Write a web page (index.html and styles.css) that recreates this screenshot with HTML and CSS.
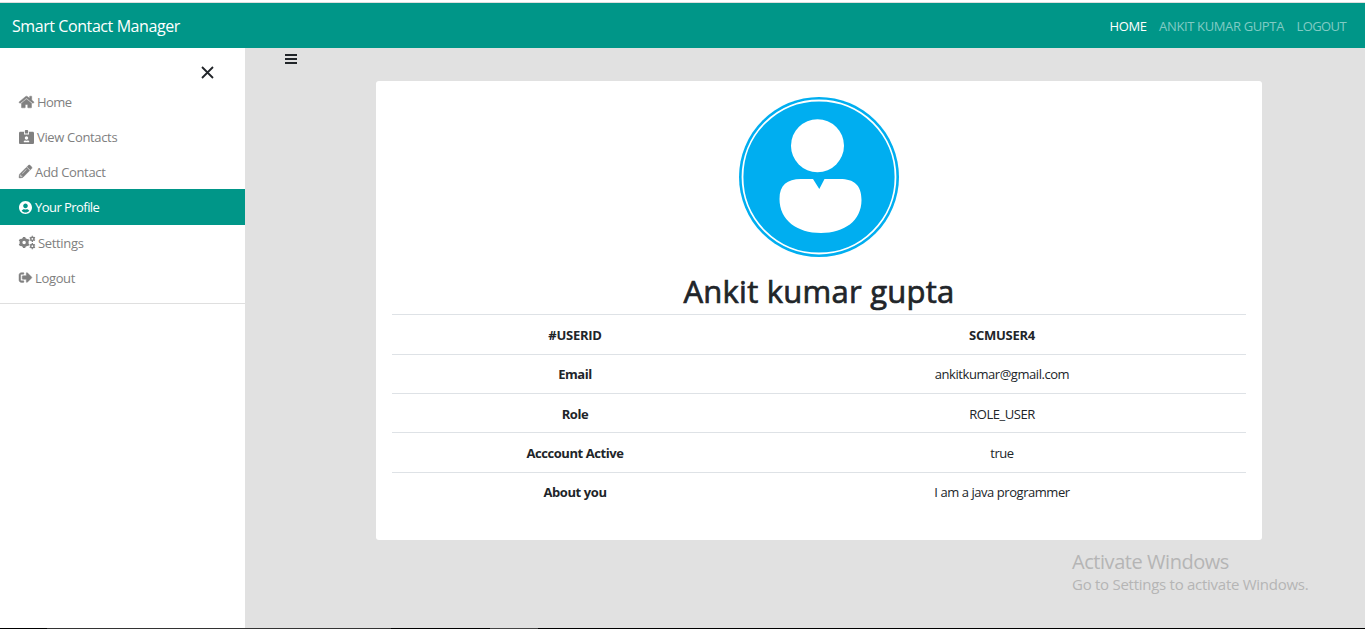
FILE: index.html
```html
<!DOCTYPE html>
<html lang="en">
<head>
<meta charset="utf-8">
<title>Smart Contact Manager</title>
<link rel="stylesheet" href="styles.css">
</head>
<body>
<div class="page">
  <header class="navbar">
    <a class="brand">Smart Contact Manager</a>
    <nav class="links"><a class="current">HOME</a><a>ANKIT KUMAR GUPTA</a><a class="tight">LOGOUT</a></nav>
  </header>
  <div class="body">
    <aside class="sidebar">
      <div class="close"><svg width="13" height="13" viewBox="0 0 13 13"><path d="M1 1L12 12M12 1L1 12" fill="none" stroke="#212529" stroke-width="1.8"/></svg></div>
      <a class="item"><svg class="bold" width="15" height="14" viewBox="0 0 576 512"><path d="M280.37 148.26L96 300.11V464a16 16 0 0 0 16 16l112.06-.29a16 16 0 0 0 15.92-16V368a16 16 0 0 1 16-16h64a16 16 0 0 1 16 16v95.64a16 16 0 0 0 16 16.05L464 480a16 16 0 0 0 16-16V300L295.67 148.26a12.19 12.19 0 0 0-15.3 0zM571.6 251.47L488 182.56V44.05a12 12 0 0 0-12-12h-56a12 12 0 0 0-12 12v72.61L318.47 43a48 48 0 0 0-61 0L4.34 251.47a12 12 0 0 0-1.6 16.9l25.5 31A12 12 0 0 0 45.15 301l235.22-193.74a12.19 12.19 0 0 1 15.3 0L530.9 301a12 12 0 0 0 16.9-1.6l25.5-31a12 12 0 0 0-1.7-16.93z"/></svg><span class="tight">Home</span></a>
      <a class="item"><svg width="15" height="14" viewBox="0 0 576 512" preserveAspectRatio="none"><path d="M528 64H384v96H192V64H48C21.5 64 0 85.5 0 112v352c0 26.500 21.500 48 48 48h480c26.500 0 48-21.500 48-48V112c0-26.500-21.500-48-48-48zM288 224c35.300 0 64 28.700 64 64s-28.700 64-64 64-64-28.700-64-64 28.700-64 64-64zm93.300 224H194.700c-10.400 0-18.800-10-15.600-19.800 8.300-25.600 32.400-44.200 60.900-44.200h8.200c12.300 5.100 25.700 8 39.800 8s27.600-2.900 39.800-8h8.200c28.400 0 52.500 18.500 60.900 44.200 3.200 9.900-5.200 19.800-15.600 19.800zM352 32c0-17.700-14.300-32-32-32h-64c-17.700 0-32 14.300-32 32v96h128V32z"/></svg><span>View Contacts</span></a>
      <a class="item"><svg class="bold" width="13" height="13" viewBox="0 0 512 512"><path d="M497.900 142.100l-46.100 46.100c-4.700 4.700-12.300 4.700-17 0l-111-111c-4.700-4.700-4.700-12.300 0-17l46.100-46.100c18.700-18.700 49.100-18.700 67.900 0l60.100 60.100c18.800 18.700 18.800 49.100 0 67.900zM284.200 99.800L21.600 362.400.4 483.900c-2.900 16.400 11.400 30.600 27.800 27.800l121.500-21.300 262.600-262.600c4.700-4.700 4.700-12.300 0-17l-111-111c-4.800-4.700-12.400-4.700-17.100 0zM124.100 339.900c-5.500-5.500-5.500-14.300 0-19.800l154-154c5.500-5.500 14.300-5.500 19.800 0s5.500 14.300 0 19.800l-154 154c-5.500 5.500-14.300 5.500-19.800 0zM88 424h48v36.300l-64.500 11.300-31.100-31.100L51.700 376H88v48z"/></svg><span>Add Contact</span></a>
      <a class="item active"><svg width="13" height="13" viewBox="0 8 496 496"><path d="M248 8C111 8 0 119 0 256s111 248 248 248 248-111 248-248S385 8 248 8zm0 96c48.600 0 88 39.400 88 88s-39.400 88-88 88-88-39.400-88-88 39.400-88 88-88zm0 344c-58.700 0-111.300-26.600-146.500-68.200 18.800-35.400 55.600-59.800 98.500-59.800 2.400 0 4.800.4 7.100 1.100 13 4.200 26.600 6.900 40.900 6.900 14.300 0 28-2.700 40.900-6.900 2.300-.7 4.700-1.100 7.100-1.100 42.900 0 79.700 24.400 98.500 59.800C359.300 421.400 306.700 448 248 448z"/></svg><span class="tight">Your Profile</span></a>
      <a class="item"><svg width="16" height="13" viewBox="0 0 640 512" class="cogs"><g transform="translate(204 256)"><circle r="126" stroke-width="112"/><path d="M0-218V218M-189-109L189 109M189-109L-189 109" stroke-width="100" stroke-dasharray="70 296 70"/></g><g transform="translate(534 110)"><circle r="66" stroke-width="60"/><path d="M0-122V122M-105-61L105 61M105-61L-105 61" stroke-width="54" stroke-dasharray="40 164 40"/></g><g transform="translate(534 402)"><circle r="66" stroke-width="60"/><path d="M0-122V122M-105-61L105 61M105-61L-105 61" stroke-width="54" stroke-dasharray="40 164 40"/></g></svg><span>Settings</span></a>
      <a class="item"><svg class="bold" width="13" height="13" viewBox="0 0 512 512"><path d="M497 273L329 441c-15 15-41 4.500-41-17v-96H152c-13.300 0-24-10.700-24-24v-96c0-13.300 10.700-24 24-24h136V88c0-21.400 25.900-32 41-17l168 168c9.300 9.400 9.300 24.600 0 34zM192 436v-40c0-6.600-5.400-12-12-12H96c-17.700 0-32-14.300-32-32V160c0-17.700 14.300-32 32-32h84c6.600 0 12-5.400 12-12V76c0-6.600-5.400-12-12-12H96c-53 0-96 43-96 96v192c0 53 43 96 96 96h84c6.600 0 12-5.400 12-12z"/></svg><span>Logout</span></a>
      <div class="divider"></div>
    </aside>
    <main class="content">
      <svg class="bars" width="12" height="10" viewBox="0 0 12 10"><path d="M0 0h12v2H0zM0 4h12v2H0zM0 8h12v2H0z" fill="#212529"/></svg>
      <section class="card">
        <svg class="avatar" width="160" height="160" viewBox="0 0 160 160"><circle cx="80" cy="80" r="80" fill="#00aef0"/><circle cx="80" cy="80" r="76.500" fill="none" stroke="#fff" stroke-width="1.800"/><circle cx="78.500" cy="48.700" r="26.500" fill="#fff"/><path d="M74 82L80.300 92L85.500 82H101C115 82 122.500 88 122.500 103C122.500 124 105 136 82 136C58 136 40.500 123 40.500 102C40.500 88 48 82 62 82Z" fill="#fff"/></svg>
        <h1>Ankit kumar gupta</h1>
        <table>
          <tr class="tall"><th class="id">#USERID</th><th class="id">SCMUSER4</th></tr>
          <tr class="raised"><th>Email</th><td>ankitkumar@gmail.com</td></tr>
          <tr><th>Role</th><td>ROLE_USER</td></tr>
          <tr class="tall"><th>Acccount Active</th><td>true</td></tr>
          <tr class="raised"><th>About you</th><td>I am a java programmer</td></tr>
        </table>
      </section>
    </main>
  </div>
  <div class="taskbar"></div>
  <div class="watermark"><div class="wm-title">Activate Windows</div><div class="wm-text">Go to Settings to activate Windows.</div></div>
</div>
</body>
</html>
```
FILE: styles.css
```css
* { box-sizing: border-box; }
body { margin: 0; font-family: "Segoe UI", "Open Sans", "Noto Sans", sans-serif; font-size: 13px; color: #212529; }
.page { position: relative; height: 629px; display: flex; flex-direction: column; overflow: hidden; padding-top: 2px; background: #fff; }
.navbar { height: 46px; flex: none; border-top: 1px solid #dedede; background: #009688; display: flex; justify-content: space-between; align-items: center; padding: 0 19px 0 12px; }
.brand { color: #fff; font-size: 16px; letter-spacing: -0.42px; }
.links { display: flex; gap: 12.5px; color: #80cbc4; letter-spacing: -0.36px; }
.links .current { color: #fff; }
.links .tight { letter-spacing: -0.6px; }
.body { flex: 1; display: flex; min-height: 0; }
.sidebar { width: 245px; background: #fff; }
.close { height: 36px; padding: 18px 0 0 201px; }
.close svg { display: block; }
.item { display: flex; align-items: center; height: 35px; padding-left: 19px; gap: 3px; color: #808080; letter-spacing: -0.34px; line-height: 18px; }
.item .tight { letter-spacing: -0.55px; }
.item svg { fill: currentColor; flex: none; overflow: visible; }
.item .bold { stroke: currentColor; stroke-width: 18px; }
.item .cogs { fill: none; stroke: currentColor; }
.active { height: 36px; background: #009688; color: #fff; }
.divider { margin-top: 8px; height: 1px; background: #dfdfdf; }
.content { flex: 1; background: #e1e1e1; }
.bars { display: block; margin: 6px 0 17px 40px; }
.card { width: 886px; height: 459px; margin-left: 131px; padding: 16px; background: #fff; border-radius: 3px; text-align: center; }
.avatar { display: block; margin: 0 auto; }
h1 { margin: 14px 0 3px; height: 40px; line-height: 40px; font-size: 31px; font-weight: 500; letter-spacing: 0.25px; -webkit-text-stroke: 0.7px #212529; white-space: nowrap; }
table { width: 100%; border-collapse: separate; border-spacing: 0; table-layout: fixed; }
tr { height: 39px; }
.tall { height: 40px; }
th, td { padding: 1px 0 0; border-top: 1px solid #dee2e6; font-size: 13px; line-height: 20px; letter-spacing: -0.45px; }
.raised th, .raised td { padding: 0 0 1px; }
th:first-child { width: 366px; }
th { font-weight: 700; letter-spacing: -0.42px; }
.id { letter-spacing: -0.25px; }
.taskbar { height: 1px; flex: none; background: linear-gradient(90deg, #000 47px, #333 47px 391px, #000 391px 490px, #444 490px 538px, #000 538px); }
.watermark { position: absolute; left: 1072px; top: 549px; color: #b5b5b5; white-space: nowrap; }
.wm-title { font-size: 20px; line-height: 26px; letter-spacing: -0.45px; }
.wm-text { font-size: 15px; line-height: 18px; letter-spacing: -0.27px; }
```
